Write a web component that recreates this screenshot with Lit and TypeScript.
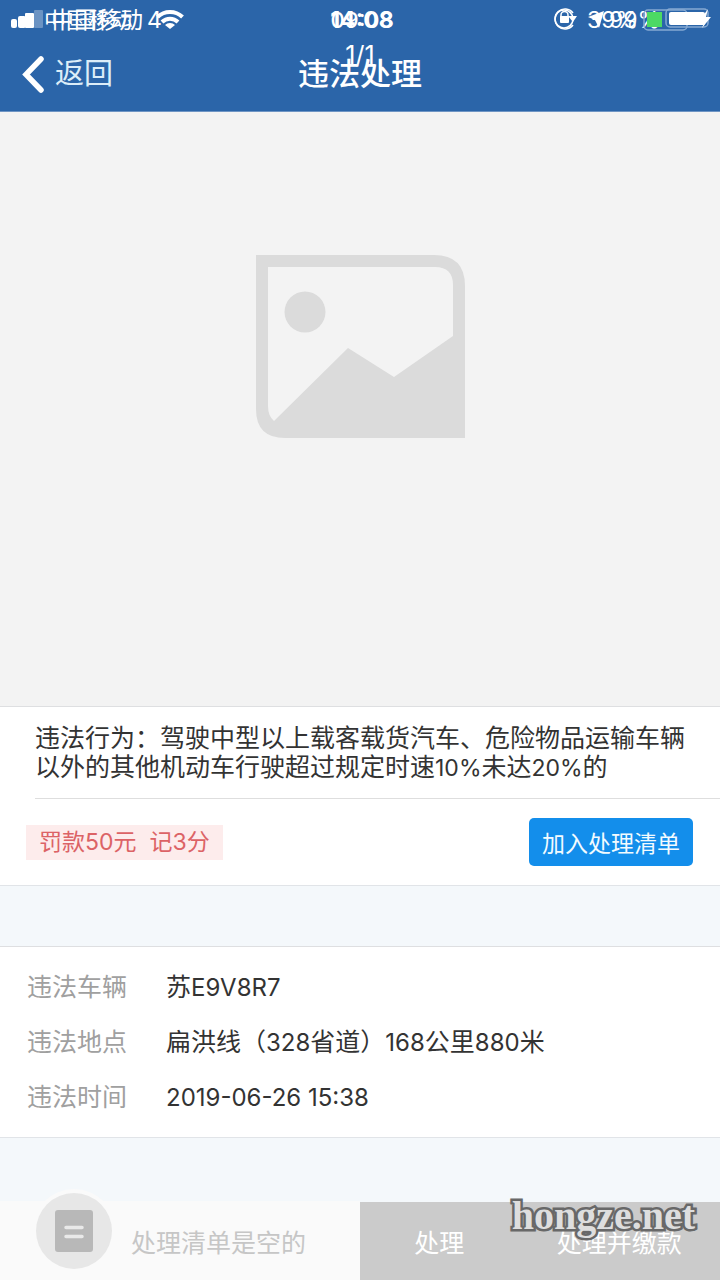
import { LitElement, html, css, svg } from "lit";
import { customElement, property } from "lit/decorators.js";

@customElement("status-bar")
class StatusBar extends LitElement {
  static styles = css`
    :host { display: block; position: relative; height: 40px; color: #fff; font-size: 23px; line-height: 40px; white-space: nowrap; }
    .layer { position: absolute; inset: 0; display: grid; grid-template-columns: 1fr auto 1fr; }
    .left { display: flex; align-items: center; padding-left: 44px; }
    .front .left { padding-left: 51px; gap: 4px; }
    .right { display: flex; align-items: center; justify-content: flex-end; padding-right: 82px; }
    .front .right { padding-right: 60px; }
    .back .left { font-size: 22px; }
    .time { font-size: 23px; font-weight: 700; padding-left: 4px; }
    .back .time { font-weight: 500; font-size: 22px; }
    .icons { position: absolute; top: 0; height: 40px; }
    .signal { left: 0; width: 200px; }
    .power { right: 0; width: 180px; }
  `;
  render() {
    return html`
      <div class="layer back">
        <div class="left">中国移动</div><div class="time">09:08</div><div class="right">39%</div>
      </div>
      <div class="layer front">
        <div class="left"><span>中国移动</span><span>4</span></div><div class="time">14:08</div><div class="right">99%</div>
      </div>
      <svg class="icons signal" viewBox="0 0 200 40" aria-hidden="true">
        ${svg`<g fill="#fff">
          <rect x="11" y="19" width="6" height="9" rx="2"/><rect x="18" y="16" width="8" height="12" rx="2"/>
          <rect x="25" y="13" width="9" height="15" rx="1"/><rect x="34" y="10" width="9" height="18" rx="1" opacity=".3"/>
        </g>
        <g fill="none" stroke="#fff" stroke-width="4"><path d="M157.500 17a18 18 0 0 1 25 0"/><path d="M162 22a11.500 11.500 0 0 1 16 0"/></g>
        <path d="M165 25a7 7 0 0 1 10 0l-5 4z" fill="#fff"/>`}
      </svg>
      <svg class="icons power" viewBox="0 0 180 40" aria-hidden="true">
        ${svg`<g fill="none" stroke="#fff">
          <circle cx="24" cy="19" r="9" stroke-width="1.500"/><path d="M33 13a10 10 0 1 0 0 12" stroke-width="1.500"/>
          <path d="M21 17v-2a3.500 3.500 0 0 1 7 0v2" stroke-width="1.500"/>
        </g>
        <rect x="20" y="16" width="9" height="7" rx="1" fill="#fff"/><path d="M28 16h9l-4 6z" fill="#fff"/>
        <path d="M48 17l16-6-5 17-4-8z" fill="#fff"/>
        <rect x="104" y="10" width="43" height="20" rx="4" fill="none" stroke="#86a9d2" stroke-width="1.500"/>
        <rect x="107" y="12" width="15" height="15" fill="#4cd964"/>
        <rect x="126" y="9" width="42" height="18" rx="4" fill="none" stroke="#86a9d2" stroke-width="1.500"/>
        <rect x="129" y="12" width="36" height="13" rx="2" fill="#fff"/>
        <path d="M168 9l-8 11h5l-3 8 9-11h-5z" fill="#fff"/>`}
      </svg>`;
  }
}

@customElement("info-row")
class InfoRow extends LitElement {
  @property() label = "";
  @property() value = "";
  static styles = css`
    :host { display: grid; grid-template-columns: 139px 1fr; align-items: center; height: 55px; font-size: 25px; line-height: 29px; }
    .label { color: #a0a0a0; }
    .value { color: #333; }
    .latin { font-size: 24px; }
  `;
  render() {
    const parts = this.value.match(/[\x20-\x7e]+|[^\x20-\x7e]+/g) ?? [];
    return html`<span class="label">${this.label}</span><span class="value">${parts.map((p) =>
      /^[\x20-\x7e]/.test(p) ? html`<span class="latin">${p}</span>` : p
    )}</span>`;
  }
}

@customElement("app-root")
class AppRoot extends LitElement {
  static styles = css`
    :host {
      display: flex; flex-direction: column; min-height: 100vh; position: relative;
      background: #f4f8fb; color: #333;
      font-family: Inter, "Noto Sans CJK SC", sans-serif;
    }
    * { box-sizing: border-box; }
    button { font: inherit; border: 0; padding: 0; margin: 0; cursor: pointer; }
    header { background: #2b65a9; color: #fff; position: relative; border-bottom: 1px solid #6f95c4; }
    nav { display: grid; grid-template-columns: 1fr auto 1fr; align-items: center; height: 71px; padding: 0 20px 4px; }
    .back { display: flex; align-items: center; gap: 9px; justify-self: start; background: none; color: #dcedf8; font-size: 29px; line-height: 40px; }
    .back svg { width: 26px; height: 40px; }
    h1 { margin: 0; font-size: 31px; font-weight: 500; line-height: 40px; }
    .count { position: absolute; top: 40px; left: 0; right: 0; text-align: center; font-size: 25px; line-height: 30px; color: #fff; }
    .photo { flex: 1; min-height: 300px; background: #f3f3f3; display: flex; justify-content: center; padding-top: 143px; }
    .photo svg { width: 209px; height: 183px; }
    .card { background: #fff; border-top: 1px solid #dedfe1; border-bottom: 1px solid #e1e4e8; }
    .desc { margin: 0 0 0 35px; padding: 17px 30px 15px 0; border-bottom: 1px solid #dedede; font-size: 25px; line-height: 29px; }
    .latin { font-size: 23px; }
    .actions { display: flex; justify-content: space-between; align-items: center; height: 86px; padding: 0 27px 0 26px; }
    .tag { background: #fdecec; color: #dc6366; font-size: 23px; line-height: 35px; padding: 0 13px; white-space: pre; }
    .add { background: #138eeb; color: #f2fbff; border-radius: 5px; height: 48px; padding: 0 13px; font-size: 23px; }
    .details { margin-top: 60px; padding: 13px 27px 12px; }
    footer { margin-top: 63px; display: grid; grid-template-columns: 50% 22% 28%; height: 79px; position: relative; font-size: 25px; }
    .empty { display: flex; align-items: center; gap: 15px; padding-left: 32px; background: #fafafa; color: #c6c6c6; white-space: nowrap; }
    .list { width: 84px; height: 84px; flex: none; align-self: flex-end; margin: -20px 0 7px; }
    .do { background: #cbcbcb; color: #fff; margin-top: 1px; }
    .mark { position: absolute; right: 25px; top: -8px; font-family: "Liberation Serif", serif; font-weight: 700; font-size: 40px; line-height: 46px; color: #dedede; -webkit-text-stroke: 5px #686868; paint-order: stroke fill; pointer-events: none; }
  `;
  render() {
    return html`
      <header>
        <status-bar></status-bar>
        <nav>
          <button class="back">
            <svg viewBox="0 0 26 40" aria-hidden="true"><path d="M21 5L6 20.500 21 36" fill="none" stroke="#fff" stroke-width="5.500" stroke-linecap="round"/></svg>返回
          </button>
          <h1>违法处理</h1>
        </nav>
        <div class="count">1/1</div>
      </header>
      <section class="photo">
        <svg viewBox="0 0 209 183" aria-hidden="true">
          <path fill="#dbdbdb" fill-rule="evenodd" d="M0 0H178Q209 0 209 31V183H29Q0 183 0 154ZM12 12V151Q12 161 18 166L92 93 138 122 197 81V30Q197 12 179 12Z"/>
          <circle cx="49" cy="57" r="20.500" fill="#dbdbdb"/>
        </svg>
      </section>
      <section class="card">
        <p class="desc">违法行为：驾驶中型以上载客载货汽车、危险物品运输车辆以外的其他机动车行驶超过规定时速<span class="latin">10%</span>未达<span class="latin">20%</span>的</p>
        <div class="actions">
          <span class="tag">罚款50元  记3分</span>
          <button class="add">加入处理清单</button>
        </div>
      </section>
      <section class="card details">
        <info-row label="违法车辆" value="苏E9V8R7"></info-row>
        <info-row label="违法地点" value="扁洪线（328省道）168公里880米"></info-row>
        <info-row label="违法时间" value="2019-06-26 15:38"></info-row>
      </section>
      <footer>
        <div class="empty">
          <svg class="list" viewBox="0 0 84 84" aria-hidden="true">
            <circle cx="42" cy="42" r="42" fill="#fafafa"/><circle cx="42" cy="42" r="38" fill="#e7e7e7"/>
            <rect x="23" y="21" width="38" height="42" rx="3" fill="#b8b8b8"/>
            <path d="M34 38.500H50M34 47.500H50" stroke="#e9e9e9" stroke-width="3.500" stroke-linecap="round"/>
          </svg>
          <span>处理清单是空的</span>
        </div>
        <button class="do">处理</button>
        <button class="do">处理并缴款</button>
        <span class="mark">hongze.net</span>
      </footer>`;
  }
}
